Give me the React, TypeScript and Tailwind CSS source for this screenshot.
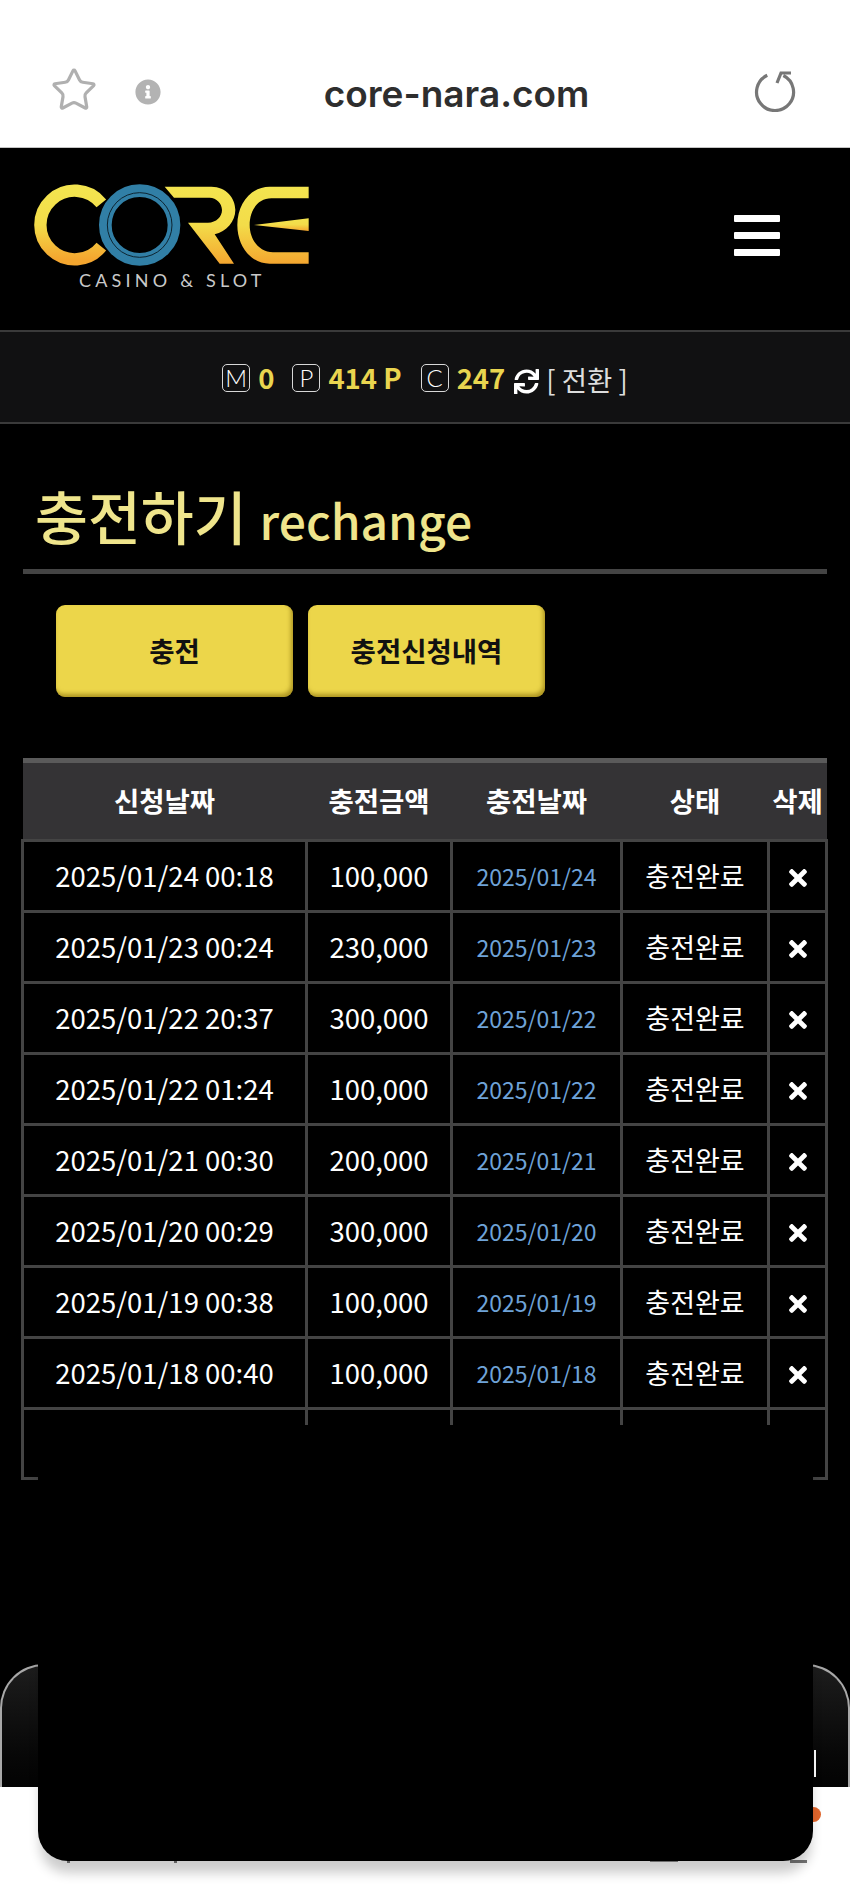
import { FaInfoCircle, FaSync, FaTimes } from "react-icons/fa";
import { Star } from "lucide-react";

const rows = [
  ["2025/01/24 00:18", "100,000", "2025/01/24"],
  ["2025/01/23 00:24", "230,000", "2025/01/23"],
  ["2025/01/22 20:37", "300,000", "2025/01/22"],
  ["2025/01/22 01:24", "100,000", "2025/01/22"],
  ["2025/01/21 00:30", "200,000", "2025/01/21"],
  ["2025/01/20 00:29", "300,000", "2025/01/20"],
  ["2025/01/19 00:38", "100,000", "2025/01/19"],
  ["2025/01/18 00:40", "100,000", "2025/01/18"],
];

function CoreLogo() {
  return (
    <svg width="310" height="100" viewBox="0 0 930 300" fill="none">
      <defs>
        <linearGradient id="coreGold" x1="0" y1="0" x2="0" y2="1">
          <stop offset="0" stopColor="#f3e44f" />
          <stop offset="0.5" stopColor="#f3dc49" />
          <stop offset="1" stopColor="#f4a62f" />
        </linearGradient>
      </defs>
      <path d="M250 100A103 103 0 1 0 250 230" stroke="url(#coreGold)" strokeWidth="37" />
      <g transform="translate(390 15)" fill="url(#coreGold)">
        <path d="M50 35H190C235 35 262 70 262 105C262 140 235 170 200 178L258 266H215L120 143H180C205 143 222 125 222 105C222 85 205 68 185 68H78Z" />
        <path d="M482 35V70H370C330 70 305 105 305 150C305 195 335 232 375 232H482V266H365C310 266 268 215 268 150C268 85 310 35 365 35Z" />
        <path d="M318 150L482 130V168Z" />
      </g>
      <circle cx="365" cy="165" r="103" stroke="#317fa6" strokeWidth="38" />
      <circle cx="365" cy="165" r="97" stroke="#0d2430" strokeWidth="3" />
    </svg>
  );
}

function BoxLetter({ letter }: { letter: string }) {
  return (
    <span className="flex h-[28px] w-[28px] items-center justify-center rounded-[5px] border-[1.5px] border-[#d8d8d8] text-[24px] font-light leading-none text-white [font-family:'Lato',sans-serif]">
      {letter}
    </span>
  );
}

export default function App() {
  return (
    <div className="relative flex h-[1898px] w-[850px] flex-col overflow-hidden bg-white [font-family:'Noto_Sans_CJK_KR','Noto_Sans',sans-serif]">
      {/* browser bar */}
      <div className="flex h-[148px] items-end border-b border-[#c4c4c4] pl-[50px] pr-[52px] pb-[33px]">
        <Star className="h-[48px] w-[48px] text-[#b0b0b0]" strokeWidth={1.6} />
        <FaInfoCircle className="ml-[37px] mb-[9px] text-[26px] text-[#b3b3b3]" />
        <div className="-mb-[3px] flex-1 pr-[4px] text-center text-[37px] font-semibold leading-[46px] text-[#2e2e2e] [font-family:'Inter',sans-serif]">
          core-nara.com
        </div>
        <svg width="42" height="42" viewBox="0 0 42 42" fill="none" stroke="#777" strokeWidth="3.2" className="mb-[2px] -translate-x-[2px]">
          <path d="M27 4.5A18.5 18.5 0 1 1 11 6.5" transform="rotate(8 21 22)" />
          <path d="M23 13L27 3L37 3" />
        </svg>
      </div>

      {/* logo + menu */}
      <div className="flex h-[182px] items-start justify-between bg-black pl-[18px] pr-[70px] pt-[22px]">
        <div>
          <CoreLogo />
          <div className="pl-[61px] text-[18px] leading-[20px] tracking-[4.2px] text-[#c9c9c9] [font-family:'Lato',sans-serif]">
            CASINO &amp; SLOT
          </div>
        </div>
        <div className="mt-[45px] flex w-[46px] flex-col gap-[10px]">
          <span className="h-[7px] rounded-[1px] bg-white" />
          <span className="h-[7px] rounded-[1px] bg-white" />
          <span className="h-[7px] rounded-[1px] bg-white" />
        </div>
      </div>

      {/* money bar */}
      <div className="flex h-[94px] items-center justify-center border-y-2 border-[#3a3a3a] bg-[#111112] pt-[2px]">
        <BoxLetter letter="M" />
        <span className="ml-[8px] text-[27.5px] font-bold leading-none text-[#e9d54f]">0</span>
        <span className="ml-[18px]">
          <BoxLetter letter="P" />
        </span>
        <span className="ml-[8px] text-[27.5px] font-bold leading-none text-[#e9d54f]">414 P</span>
        <span className="ml-[19px]">
          <BoxLetter letter="C" />
        </span>
        <span className="ml-[8px] text-[27.5px] font-bold leading-none text-[#e9d54f]">247</span>
        <FaSync className="ml-[9px] mt-[6px] text-[25px] text-white" />
        <span className="ml-[7px] mt-[3px] text-[27.5px] leading-none text-[#ddd]">[ 전환 ]</span>
      </div>

      {/* content */}
      <div className="flex flex-1 flex-col bg-black">
        <div className="px-[23px]">
          <div className="flex h-[145px] items-baseline pl-[12px] pt-[56px] font-medium text-[#efe58c]">
            <span className="text-[57.5px] leading-[70px]">충전하기</span>
            <span className="ml-[13px] text-[48px] leading-[70px]">rechange</span>
          </div>
          <div className="h-[5px] bg-[#444]" />

          <div className="ml-[33px] mt-[31px] flex gap-[15px]">
            <button className="h-[92px] w-[237px] rounded-[9px] bg-[#ecd64a] text-[27.5px] font-bold text-[#111] shadow-[inset_-2px_-3px_4px_rgba(120,95,0,0.55)]">
              충전
            </button>
            <button className="h-[92px] w-[237px] rounded-[9px] bg-[#ecd64a] text-[27.5px] font-bold text-[#111] shadow-[inset_-2px_-3px_4px_rgba(120,95,0,0.55)]">
              충전신청내역
            </button>
          </div>

          <table className="-ml-[2px] mt-[61px] w-[804px] table-fixed border-collapse text-center text-[27.5px] text-white">
            <thead>
              <tr className="h-[80px] border-t-[5px] border-[#5a5a5a] bg-[#343335]">
                <th className="w-[284px] font-bold">신청날짜</th>
                <th className="w-[145px] font-bold">충전금액</th>
                <th className="w-[170px] font-bold">충전날짜</th>
                <th className="w-[147px] font-bold">상태</th>
                <th className="w-[58px] font-bold">삭제</th>
              </tr>
            </thead>
            <tbody>
              {rows.map((row) => (
                <tr key={row[0]} className="h-[71px]">
                  <td className="border-[3px] border-[#444]">{row[0]}</td>
                  <td className="border-[3px] border-[#444]">{row[1]}</td>
                  <td className="border-[3px] border-[#444] text-[23px] text-[#6fa3d8]">{row[2]}</td>
                  <td className="border-[3px] border-[#444] text-[27px]">충전완료</td>
                  <td className="border-[3px] border-[#444]">
                    <FaTimes className="mx-auto mt-[4px] text-[26px]" />
                  </td>
                </tr>
              ))}
              <tr className="h-[70px]">
                <td className="border-[3px] border-[#444]" />
                <td className="border-[3px] border-[#444]" />
                <td className="border-[3px] border-[#444]" />
                <td className="border-[3px] border-[#444]" />
                <td className="border-[3px] border-[#444]" />
              </tr>
            </tbody>
          </table>
        </div>

        {/* footer tab bar, mostly hidden by the sheet */}
        <div className="relative mt-auto h-[123px] rounded-t-[44px] border-x-2 border-t-2 border-[#a8a8a8] bg-gradient-to-b from-[#1d1d1d] to-[#030303]">
          <span className="absolute left-[812px] top-[84px] h-[27px] w-[2px] bg-white" />
        </div>
      </div>

      {/* white strip below the footer, tab icons peek out under the sheet */}
      <div className="relative h-[111px]">
        <span className="absolute left-[67px] top-[73px] h-[3px] w-[3px] bg-[#777]" />
        <span className="absolute left-[174px] top-[73px] h-[3px] w-[3px] bg-[#777]" />
        <span className="absolute left-[650px] top-[73px] h-[2px] w-[28px] bg-[#888]" />
        <span className="absolute left-[790px] top-[73px] h-[3px] w-[17px] bg-[#777]" />
        <span className="absolute left-[806px] top-[20px] h-[15px] w-[15px] rounded-full bg-[#e2662c]" />
      </div>

      {/* blank sheet on top */}
      <div className="absolute left-[38px] top-[1425px] h-[436px] w-[775px] rounded-b-[30px] bg-black shadow-[0_14px_12px_-2px_rgba(0,0,0,0.2)]" />
    </div>
  );
}
